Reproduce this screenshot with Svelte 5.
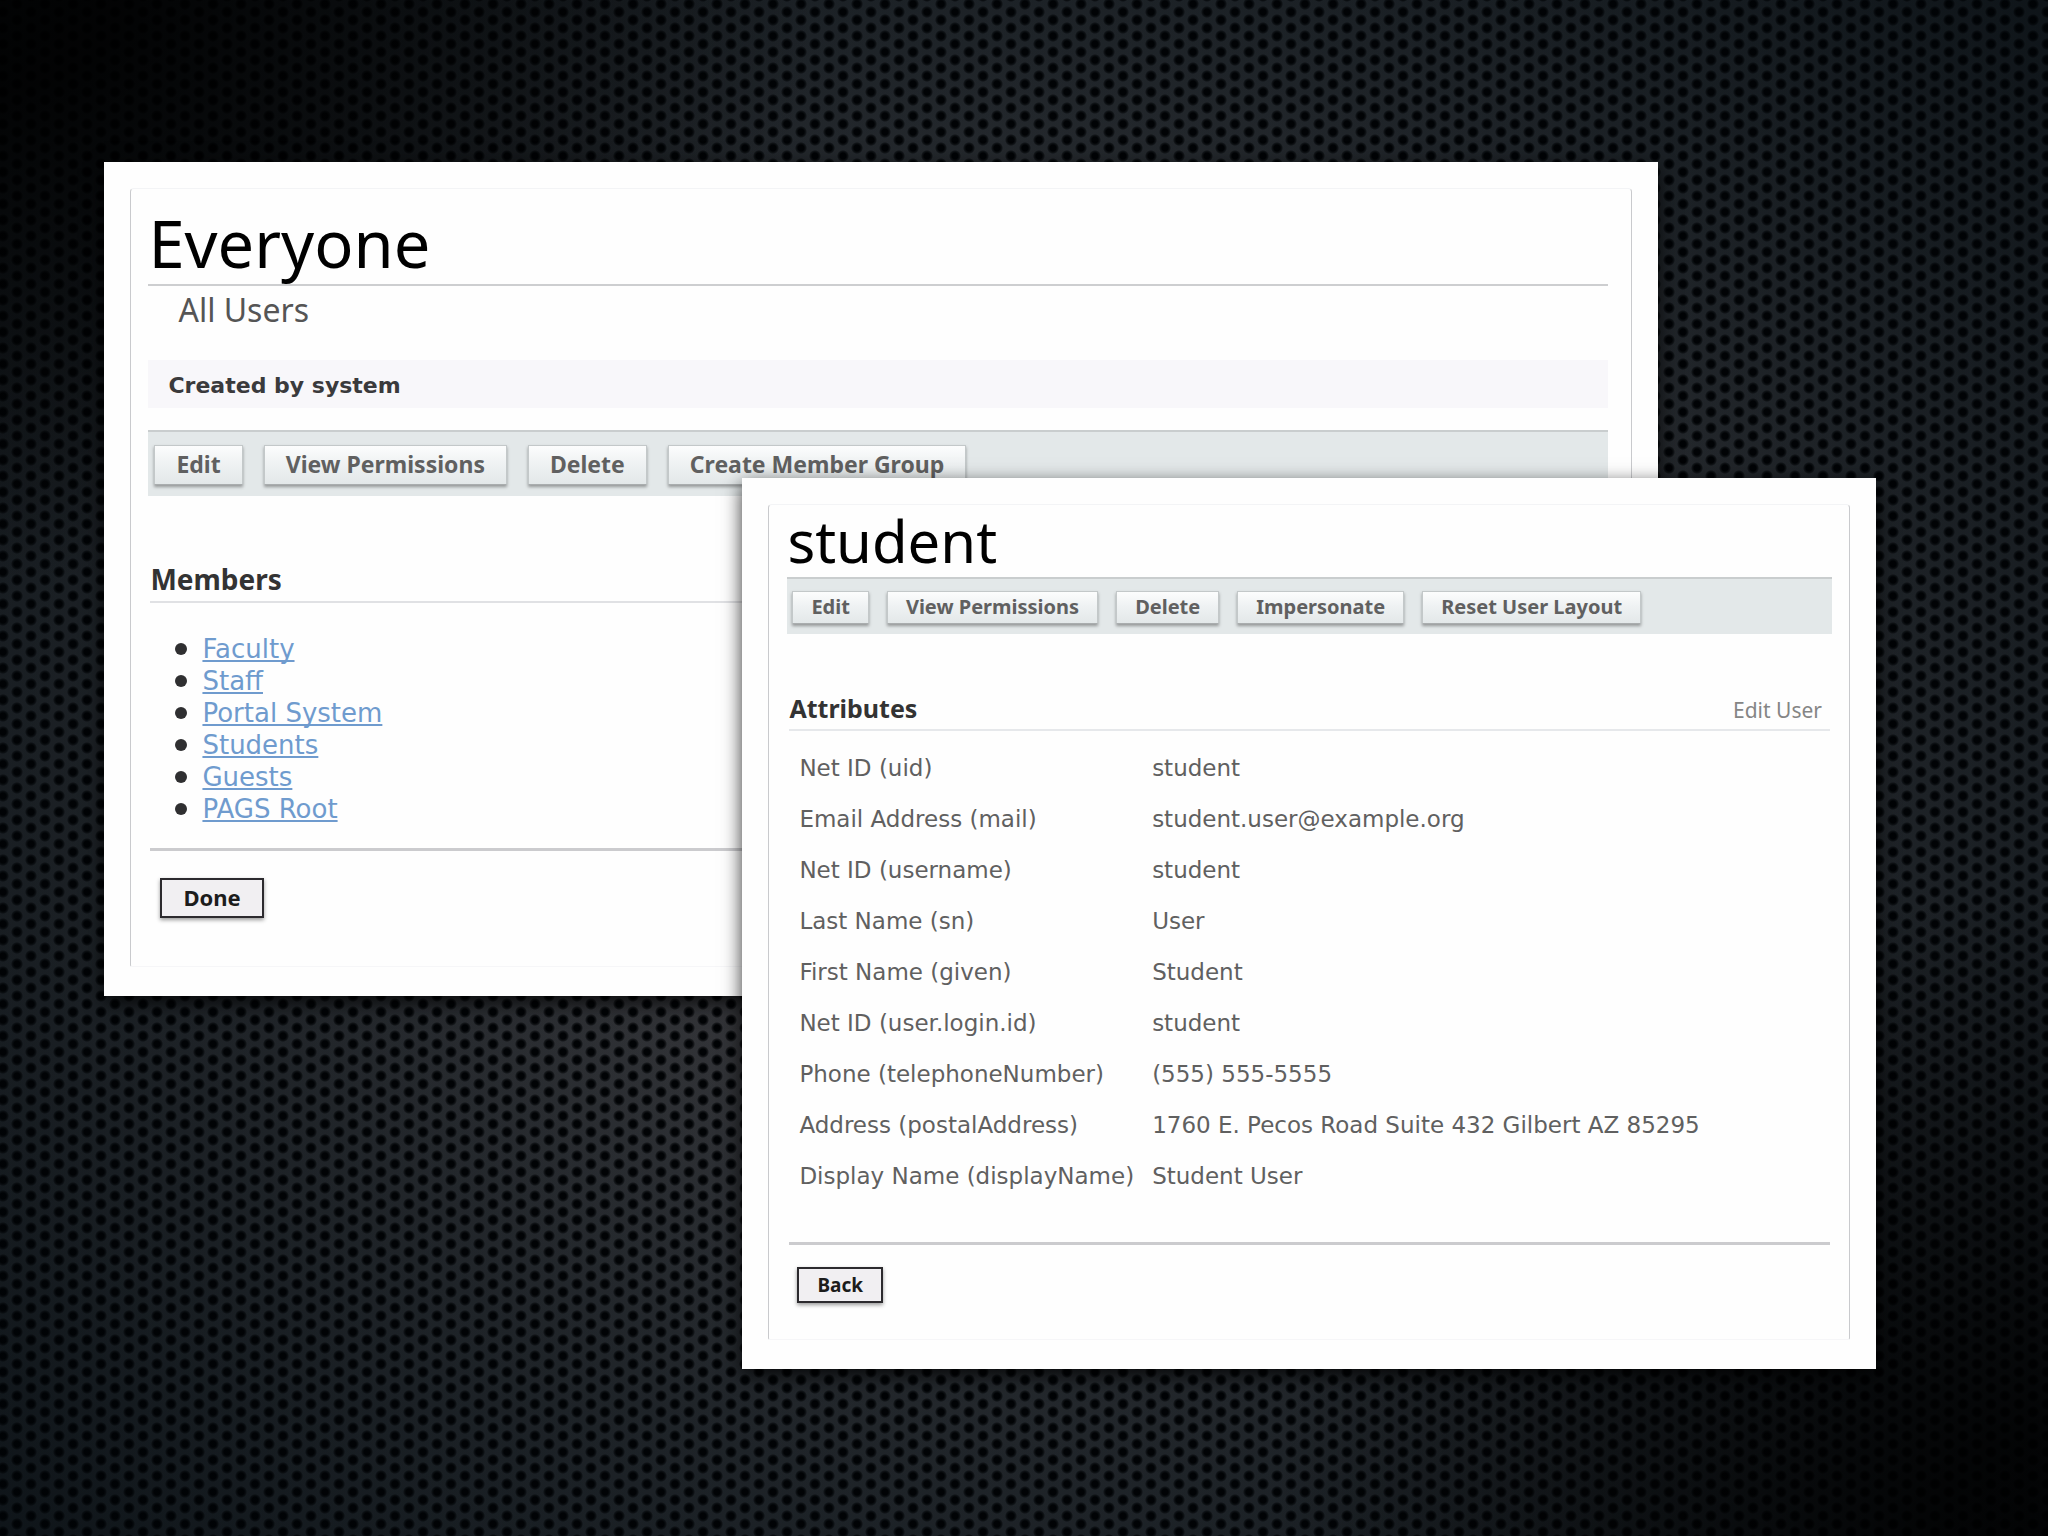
<script>
  const groupActions = ['Edit', 'View Permissions', 'Delete', 'Create Member Group'];
  const members = ['Faculty', 'Staff', 'Portal System', 'Students', 'Guests', 'PAGS Root'];

  const userActions = ['Edit', 'View Permissions', 'Delete', 'Impersonate', 'Reset User Layout'];
  const attributes = [
    ['Net ID (uid)', 'student'],
    ['Email Address (mail)', 'student.user@example.org'],
    ['Net ID (username)', 'student'],
    ['Last Name (sn)', 'User'],
    ['First Name (given)', 'Student'],
    ['Net ID (user.login.id)', 'student'],
    ['Phone (telephoneNumber)', '(555) 555-5555'],
    ['Address (postalAddress)', '1760 E. Pecos Road Suite 432 Gilbert AZ 85295'],
    ['Display Name (displayName)', 'Student User']
  ];
</script>

<main class="stage">
  <section class="window group" aria-labelledby="group-title">
    <div class="frame">
      <h1 id="group-title">Everyone</h1>
      <p class="description">All Users</p>
      <p class="created">Created by system</p>
      <div class="toolbar">
        {#each groupActions as action}
          <button type="button" class="action">{action}</button>
        {/each}
      </div>
      <h2>Members</h2>
      <ul>
        {#each members as member}
          <li><a href="#member">{member}</a></li>
        {/each}
      </ul>
      <div class="footer">
        <button type="button" class="primary">Done</button>
      </div>
    </div>
  </section>

  <section class="window user" aria-labelledby="user-title">
    <div class="frame">
      <h1 id="user-title">student</h1>
      <div class="toolbar">
        {#each userActions as action}
          <button type="button" class="action">{action}</button>
        {/each}
      </div>
      <header class="section-head">
        <h2>Attributes</h2>
        <a href="#edit-user">Edit User</a>
      </header>
      <table>
        <tbody>
          {#each attributes as [name, value]}
            <tr>
              <th scope="row">{name}</th>
              <td>{value}</td>
            </tr>
          {/each}
        </tbody>
      </table>
      <div class="footer">
        <button type="button" class="primary">Back</button>
      </div>
    </div>
  </section>
</main>

<style>
  :global(body) {
    background: #000;
  }

  /* Perforated metal: two offset hole grids under corner and edge shading */
  .stage {
    box-sizing: border-box;
    min-height: 100vh;
    padding-bottom: 80px;
    display: grid;
    align-items: start;
    font-family: 'Noto Sans', 'Open Sans', sans-serif;
    background:
      radial-gradient(ellipse 40% 38% at 0% 0%, rgba(0, 0, 0, 0.85) 15%, rgba(0, 0, 0, 0) 100%),
      radial-gradient(ellipse 38% 42% at 100% 100%, rgba(0, 0, 0, 0.8) 15%, rgba(0, 0, 0, 0) 100%),
      radial-gradient(ellipse 72% 84% at 50% 50%, rgba(0, 3, 6, 0) 20%, rgba(0, 3, 6, 0.35) 55%, rgba(0, 3, 6, 0.7) 100%),
      radial-gradient(circle at 14px 8px, #010305 3px, rgba(1, 3, 5, 0.5) 5px, rgba(1, 3, 5, 0) 6px) 3px -4px / 28px 16px,
      radial-gradient(circle at 14px 8px, #010305 3px, rgba(1, 3, 5, 0.5) 5px, rgba(1, 3, 5, 0) 6px) -11px 4px / 28px 16px,
      radial-gradient(ellipse 70% 70% at 50% 50%, #37383c 30%, #28333a 100%);
  }

  .window {
    grid-area: 1 / 1;
    background: #fefefe;
    box-shadow: 0 6px 18px rgba(0, 0, 0, 0.8);
  }

  .group {
    margin: 162px 19.05% 0 5.1%;
    padding: 26px 26px 29px;
  }

  .user {
    margin: 478px 8.4% 0 36.25%;
    padding: 26px 26px 29px;
  }

  .frame {
    border: 1px solid #c9cacd;
    border-top-color: #f3f4f6;
    border-bottom-color: #f6f6f8;
    border-radius: 4px 4px 2px 2px;
  }

  .group .frame {
    padding: 13px 23px 48px 17px;
  }

  .user .frame {
    padding: 0 17px 36px 18px;
  }

  h1,
  h2,
  p {
    margin: 0;
  }

  h1 {
    color: #000;
    font-weight: 400;
  }

  .group h1 {
    border-bottom: 2px solid #cdced0;
    font-size: 65px;
    line-height: 82px;
  }

  .user h1 {
    font-size: 58px;
    line-height: 72px;
  }

  .description {
    padding: 4px 30px 30px;
    color: #555;
    font-size: 32px;
    line-height: 40px;
  }

  .created {
    padding: 4px 20px 0;
    background: #f8f7fa;
    color: #3a3a3c;
    font-family: 'DejaVu Sans', sans-serif;
    font-size: 22px;
    font-weight: 700;
    line-height: 44px;
  }

  .toolbar {
    display: flex;
    flex-wrap: wrap;
    background: #e3e8e9;
    border-top: 2px solid #c9cdce;
  }

  .group .toolbar {
    gap: 21px;
    margin-top: 22px;
    padding: 13px 6px 11px;
  }

  .user .toolbar {
    gap: 18px;
    padding: 12px 5px 10px;
  }

  button {
    box-sizing: border-box;
    font-family: inherit;
    font-weight: 700;
    line-height: 24px;
    white-space: nowrap;
  }

  .action {
    border: 1px solid #c3c8c9;
    border-bottom-color: #a9adae;
    background: linear-gradient(#fcfdfd, #eff2f3 45%, #e3e8e9);
    color: #606060;
    box-shadow: 0 2px 3px rgba(0, 0, 0, 0.35);
  }

  .group .action {
    height: 40px;
    padding: 0 21px 3px;
    font-size: 23px;
  }

  .user .action {
    height: 33px;
    padding: 0 18px 2px;
    font-size: 20px;
  }

  h2 {
    color: #333;
    font-weight: 700;
  }

  .group h2 {
    margin: 65px 0 30px 2px;
    padding-bottom: 4px;
    border-bottom: 2px solid #e0e1e4;
    font-size: 28px;
    line-height: 36px;
  }

  ul {
    margin: 0;
    padding: 0 0 23px 27px;
    font-family: 'DejaVu Sans', sans-serif;
    font-size: 26px;
    line-height: 32px;
    list-style: none;
  }

  li {
    display: flex;
    align-items: center;
    gap: 15px;
  }

  li::before {
    content: '';
    width: 12px;
    height: 12px;
    border-radius: 50%;
    background: #2f2f31;
  }

  ul a {
    color: #6f9bce;
    text-decoration-thickness: 2px;
    text-underline-offset: 2px;
    text-decoration-skip-ink: none;
  }

  .section-head {
    display: flex;
    justify-content: space-between;
    align-items: baseline;
    margin: 59px 2px 12px;
    padding-bottom: 4px;
    border-bottom: 2px solid #e6e8eb;
    line-height: 30px;
  }

  .section-head h2 {
    font-size: 25px;
  }

  .section-head a {
    padding-right: 8px;
    color: #858585;
    font-size: 21px;
    text-decoration: none;
  }

  table {
    margin-bottom: 40px;
    border-collapse: collapse;
    color: #606060;
    font-family: 'DejaVu Sans', sans-serif;
    font-size: 23px;
    line-height: 51px;
  }

  th {
    padding: 0 18px 0 12px;
    font-weight: 400;
    text-align: left;
    white-space: nowrap;
  }

  td {
    padding: 0;
  }

  .footer {
    margin: 0 2px;
    border-top: 3px solid #cbcbce;
  }

  .group .footer {
    padding: 27px 10px 0;
  }

  .user .footer {
    padding: 22px 8px 0;
  }

  .primary {
    display: block;
    border: 2px solid #2c2a2e;
    background: #f1eff2;
    color: #1c1c1c;
    box-shadow: 0 2px 4px rgba(0, 0, 0, 0.4);
  }

  .group .primary {
    height: 40px;
    padding: 0 21px 2px;
    font-size: 22px;
  }

  .user .primary {
    height: 36px;
    padding: 0 18px 1px;
    font-size: 19px;
  }
</style>
